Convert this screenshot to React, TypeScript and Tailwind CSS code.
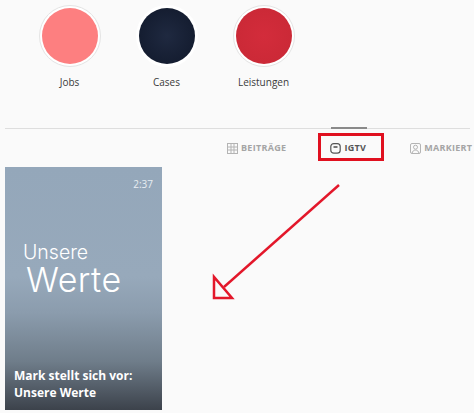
const highlights = [
  { label: "Jobs", fill: "bg-[#fd7f80]", ring: true },
  { label: "Cases", fill: "bg-[radial-gradient(circle,#1f2940_0%,#10182a_100%)]", ring: false },
  { label: "Leistungen", fill: "bg-[radial-gradient(circle,#d32c3b_0%,#c82835_100%)]", ring: true },
];

function Highlight({ label, fill, ring }: { label: string; fill: string; ring: boolean }) {
  return (
    <div className="flex w-[97px] flex-col items-center">
      <div className={`flex h-[62px] w-[62px] items-center justify-center rounded-full bg-white ${ring ? "border border-[#e4e4e4]" : ""}`}>
        <div className={`h-[56px] w-[56px] rounded-full ${fill}`} />
      </div>
      <span className="mt-[7px] text-[10px] font-medium leading-[16px] text-[#3a3a3a]">{label}</span>
    </div>
  );
}

function GridIcon() {
  return (
    <svg width="11" height="11" viewBox="0 0 11 11" fill="none" stroke="#b4b4b4" strokeWidth="1">
      <rect x="0.5" y="0.5" width="10" height="10" />
      <path d="M4 .5v10M7 .5v10M.5 4h10M.5 7h10" />
    </svg>
  );
}

function TvIcon() {
  return (
    <svg width="11" height="12" viewBox="0 0 11 12" fill="none" stroke="#555" strokeWidth="1.2">
      <rect x="0.8" y="1.6" width="9.4" height="9.6" rx="3" />
      <path d="M3.5 5h4" strokeWidth="1.6" />
    </svg>
  );
}

function TagIcon() {
  return (
    <svg width="11" height="11" viewBox="0 0 11 11" fill="none" stroke="#b4b4b4" strokeWidth="1">
      <rect x="0.5" y="0.5" width="10" height="10" rx="1.5" />
      <circle cx="5.5" cy="4.2" r="2" />
      <path d="M2 10.5c.4-2.4 1.8-3.4 3.5-3.4s3.1 1 3.5 3.4" />
    </svg>
  );
}

export default function App() {
  return (
    <div className="relative h-[413px] w-[474px] overflow-hidden bg-[#fafafa] font-['Open_Sans',sans-serif]">
      <div className="flex pl-[21px] pt-[5px]">
        {highlights.map((h) => (
          <Highlight key={h.label} {...h} />
        ))}
      </div>

      <div className="relative ml-[5px] mt-[38px] w-[465px] border-t border-[#dedede]">
        <div className="absolute left-[326px] top-[-2px] h-[2px] w-[36px] bg-[#8a8a8a]" />
        <div className="flex h-[38px] items-center pl-[222px] text-[9px] font-bold tracking-[0.3px]">
          <div className="flex items-center gap-[3px] text-[#a5a5a5]">
            <GridIcon />
            <span>BEITRÄGE</span>
          </div>
          <div className="ml-[44px] flex items-center gap-[3px] text-[#555]">
            <TvIcon />
            <span>IGTV</span>
          </div>
          <div className="ml-[44px] flex items-center gap-[3px] whitespace-nowrap text-[#a5a5a5]">
            <TagIcon />
            <span>MARKIERT</span>
          </div>
        </div>
      </div>

      <div className="relative ml-[5px] h-[243px] w-[157px] bg-[linear-gradient(180deg,#94a7ba_0%,#97a9bb_45%,#8b9cad_60%,#6f7d8a_80%,#3c424b_100%)] text-white">
        <div className="absolute right-[9px] top-[10px] text-[10px] leading-[14px] text-[#e8edf2]">2:37</div>
        <div className="pl-[18px] pt-[74px] font-['Inter',sans-serif] font-light">
          <div className="text-[19.5px] leading-[22px]">Unsere</div>
          <div className="ml-[3px] text-[34px] leading-[33px] tracking-[0.5px]">Werte</div>
        </div>
        <div className="absolute bottom-[9px] left-[9px] text-[12px] font-bold leading-[17px]">
          Mark stellt sich vor:
          <br />
          Unsere Werte
        </div>
      </div>

      <div className="absolute left-[318px] top-[133px] h-[28px] w-[66px] border-[3px] border-[#e0101f]" />
      <svg className="absolute left-0 top-0" width="474" height="413" fill="none" stroke="#e3172a">
        <path d="M339 185L224 287" strokeWidth="2.4" />
        <path d="M214 277v21h18z" strokeWidth="2.5" fill="#fafafa" />
      </svg>
    </div>
  );
}
